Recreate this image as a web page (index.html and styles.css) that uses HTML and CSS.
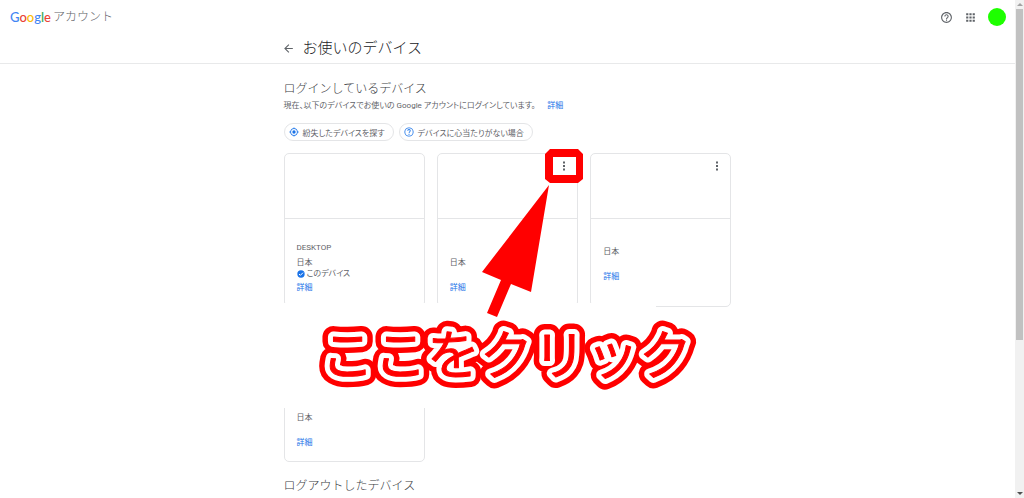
FILE: index.html
```html
<!DOCTYPE html>
<html lang="ja">
<head>
  <meta charset="UTF-8">
  <meta name="viewport" content="width=device-width, initial-scale=1.0">
  <title>お使いのデバイス</title>
  <link rel="stylesheet" href="styles.css">
</head>
<body>
  <div class="page">
    <header class="header">
      <div class="topbar">
        <a class="brand" href="#">
          <span class="logo"><span class="blue">G</span><span class="red">o</span><span class="yellow">o</span><span class="blue">g</span><span class="green">l</span><span class="red">e</span></span>
          <span class="brand-name">アカウント</span>
        </a>
        <div class="actions">
          <button class="icon-btn" type="button" aria-label="ヘルプ">
            <svg width="13" height="13" viewBox="0 0 24 24" fill="#5f6368"><path d="M11 18h2v-2h-2v2zm1-16C6.480 2 2 6.480 2 12s4.480 10 10 10 10-4.480 10-10S17.520 2 12 2zm0 18c-4.410 0-8-3.590-8-8s3.590-8 8-8 8 3.590 8 8-3.590 8-8 8zm0-14c-2.210 0-4 1.790-4 4h2c0-1.100.9-2 2-2s2 .9 2 2c0 2-3 1.750-3 5h2c0-2.250 3-2.500 3-5 0-2.210-1.790-4-4-4z"/></svg>
          </button>
          <button class="icon-btn" type="button" aria-label="アプリ">
            <svg width="13" height="13" viewBox="0 0 24 24" fill="#5f6368"><path d="M4 8h4V4H4v4zm6 12h4v-4h-4v4zm-6 0h4v-4H4v4zm0-6h4v-4H4v4zm6 0h4v-4h-4v4zm6-10v4h4V4h-4zm-6 4h4V4h-4v4zm6 6h4v-4h-4v4zm0 6h4v-4h-4v4z"/></svg>
          </button>
          <button class="avatar" type="button" aria-label="アカウント"></button>
        </div>
      </div>
      <div class="title-row">
        <a class="back" href="#" aria-label="戻る">
          <svg width="13" height="13" viewBox="0 0 24 24" fill="#5f6368"><path d="M20 11H7.830l5.590-5.590L12 4l-8 8 8 8 1.410-1.410L7.830 13H20v-2z"/></svg>
        </a>
        <h1>お使いのデバイス</h1>
      </div>
    </header>

    <main class="content">
      <h2>ログインしているデバイス</h2>
      <p class="lead">現在、以下のデバイスでお使いの Google アカウントにログインしています。 <a href="#">詳細</a></p>

      <div class="chips">
        <button class="chip" type="button">
          <svg width="10" height="10" viewBox="0 0 24 24" fill="#1a73e8"><path d="M12 8a4 4 0 1 0 0 8 4 4 0 0 0 0-8zm8.940 3A9 9 0 0 0 13 3.060V1h-2v2.060A9 9 0 0 0 3.060 11H1v2h2.060A9 9 0 0 0 11 20.940V23h2v-2.060A9 9 0 0 0 20.940 13H23v-2h-2.060zM12 19a7 7 0 1 1 0-14 7 7 0 0 1 0 14z"/></svg>
          紛失したデバイスを探す
        </button>
        <button class="chip" type="button">
          <svg width="10" height="10" viewBox="0 0 24 24" fill="#1a73e8"><path d="M11 19h2v-2h-2v2zM12 1a11 11 0 1 0 0 22 11 11 0 0 0 0-22zm0 20a9 9 0 1 1 0-18 9 9 0 0 1 0 18zm0-16c-2.210 0-4 1.790-4 4h2c0-1.100.9-2 2-2s2 .9 2 2c0 2-3 2.750-3 6h2c0-2.250 3-3.500 3-6 0-2.210-1.790-4-4-4z"/></svg>
          デバイスに心当たりがない場合
        </button>
      </div>

      <div class="devices">
        <section class="card">
          <div class="card-head"></div>
          <div class="card-body">
            <div class="device-name">DESKTOP</div>
            <div class="device-info">
              <div>日本</div>
              <div class="current">
                <svg width="8" height="8" viewBox="0 0 24 24"><circle cx="12" cy="12" r="11" fill="#1a73e8"/><path d="M6 12l4 4 8-8" fill="none" stroke="#fff" stroke-width="3"/></svg>
                このデバイス
              </div>
            </div>
            <a href="#">詳細</a>
          </div>
        </section>

        <section class="card">
          <div class="card-head">
            <button class="more" type="button" aria-label="その他">
              <svg width="12" height="12" viewBox="0 0 24 24" fill="#5f6368"><path d="M10 3h4v4h-4zM10 10h4v4h-4zM10 17h4v4h-4z"/></svg>
            </button>
          </div>
          <div class="card-body">
            <div class="device-name"></div>
            <div class="device-info">日本</div>
            <a href="#">詳細</a>
          </div>
        </section>

        <section class="card">
          <div class="card-head">
            <button class="more" type="button" aria-label="その他">
              <svg width="12" height="12" viewBox="0 0 24 24" fill="#5f6368"><path d="M10 3h4v4h-4zM10 10h4v4h-4zM10 17h4v4h-4z"/></svg>
            </button>
          </div>
          <div class="card-body compact">
            <div class="device-info">日本</div>
            <a href="#">詳細</a>
          </div>
        </section>

        <section class="card">
          <div class="card-head"></div>
          <div class="card-body compact">
            <div class="device-info">日本</div>
            <a href="#">詳細</a>
          </div>
        </section>

        <!-- annotation over the cards -->
        <div class="cover"></div>
        <svg class="arrow" width="110" height="170" viewBox="0 0 110 170">
          <path fill="#f00" fill-rule="evenodd" d="M72 0h28l5 5v25l-5 4H72l-5-4V5zM75 8v18h23V8z"/>
          <path fill="#f00" d="M71 36L53 143l-20-8-14 33-10-4 14-33-19-8z"/>
        </svg>
        <svg class="callout" width="400" height="90" viewBox="0 0 400 90">
          <text id="callout-text" x="15" y="63">ここをクリック</text>
          <use class="inner" href="#callout-text"/>
          <use class="core" href="#callout-text"/>
        </svg>
      </div>

      <h2>ログアウトしたデバイス</h2>
    </main>
  </div>

  <div class="scrollbar">
    <svg width="9" height="9" viewBox="0 0 9 9"><path d="M2 6l3-3 3 3z" fill="#a3a3a3"/></svg>
    <div class="track"><div class="thumb"></div></div>
    <svg width="9" height="9" viewBox="0 0 9 9"><path d="M2 3l3 3 3-3z" fill="#505050"/></svg>
  </div>
</body>
</html>
```
FILE: styles.css
```css
* {
  box-sizing: border-box;
}

body {
  margin: 0;
  display: flex;
  height: 100vh;
  overflow: hidden;
  background-color: #fff;
  color: #5f6368;
  font-family: Roboto, "Noto Sans CJK JP", sans-serif;
  font-size: 8px;
  font-feature-settings: "palt";
}

a {
  color: #1a73e8;
  text-decoration: none;
}

button {
  padding: 0;
  border: none;
  background: none;
  color: inherit;
  font: inherit;
  font-feature-settings: inherit;
  cursor: pointer;
}

svg {
  display: block;
  flex: none;
}

h1, h2 {
  margin: 0;
  font-weight: 300;
  font-feature-settings: normal;
}

h1 {
  color: #202124;
  font-size: 15px;
  line-height: 20px;
}

h2 {
  color: #3c4043;
  font-size: 12px;
  line-height: 18px;
}

.page {
  flex: 1;
  min-width: 0;
}

/* header */
.header {
  height: 64px;
  border-bottom: 1px solid #e8e9ea;
}

.topbar {
  display: flex;
  justify-content: space-between;
  align-items: center;
  height: 34px;
  padding: 0 9px 0 10px;
}

.brand {
  display: flex;
  align-items: center;
  gap: 2px;
}

.logo {
  font-family: Lato, sans-serif;
  font-size: 13px;
  font-weight: 500;
  line-height: 18px;
}

.blue { color: #4285f4; }
.red { color: #ea4335; }
.yellow { color: #fbbc05; }
.green { color: #34a853; }

.brand-name {
  color: #5f6368;
  font-size: 12px;
  font-weight: 300;
  line-height: 18px;
  font-feature-settings: normal;
}

.actions {
  display: flex;
  align-items: center;
  gap: 11px;
}

.avatar {
  width: 18px;
  height: 18px;
  border-radius: 50%;
  background-color: #1eff00;
}

.title-row {
  display: flex;
  align-items: center;
  gap: 8px;
  max-width: 448px;
  height: 28px;
  margin: 0 auto;
}

.back {
  margin-left: -2px;
}

/* content */
.content {
  max-width: 448px;
  margin: 0 auto;
  padding-top: 16px;
}

.lead {
  margin: 2px 0 11px;
  line-height: 12px;
}

.lead a {
  margin-left: 10px;
}

.chips {
  display: flex;
  gap: 5px;
  margin-bottom: 12px;
}

.chip {
  display: flex;
  align-items: center;
  gap: 4px;
  height: 18px;
  padding: 0 8px 0 4px;
  border: 1px solid #e4e5e7;
  border-radius: 9px;
}

.devices {
  position: relative;
  display: grid;
  grid-template-columns: repeat(3, 1fr);
  gap: 12px;
  margin-bottom: 15px;
}

.card {
  border: 1px solid #e4e5e7;
  border-radius: 5px;
}

.card-head {
  display: flex;
  justify-content: flex-end;
  align-items: flex-start;
  height: 65px;
  padding: 6px 7px;
  border-bottom: 1px solid #e4e5e7;
}

.card-body {
  padding: 23px 12px 13px;
  line-height: 11px;
}

.card-body.compact {
  padding-top: 27px;
}

.card-body a {
  display: inline-block;
  margin-top: 3px;
}

.device-name {
  min-height: 12px;
  margin-bottom: 3px;
  line-height: 12px;
}

.device-info {
  min-height: 22px;
}

.current {
  display: flex;
  align-items: center;
  gap: 2px;
}

/* annotation */
.cover {
  position: absolute;
  top: 150px;
  left: -4px;
  width: 376px;
  height: 105px;
  background-color: #fff;
}

.arrow {
  position: absolute;
  top: -4px;
  left: 194px;
}

.callout {
  position: absolute;
  top: 159px;
  left: 22px;
  overflow: visible;
  fill: #f00;
  stroke: #f00;
  stroke-width: 22px;
  stroke-linejoin: round;
  font-size: 53px;
  font-feature-settings: normal;
}

.callout .inner {
  stroke: #fff;
  stroke-width: 11px;
}

.callout .core {
  stroke: #f00;
  stroke-width: 1px;
}

/* scrollbar */
.scrollbar {
  display: flex;
  flex-direction: column;
  width: 9px;
  background-color: #f1f1f1;
}

.track {
  flex: 1;
  padding: 0 1px;
}

.thumb {
  height: 69%;
  background-color: #c1c1c1;
}
```
